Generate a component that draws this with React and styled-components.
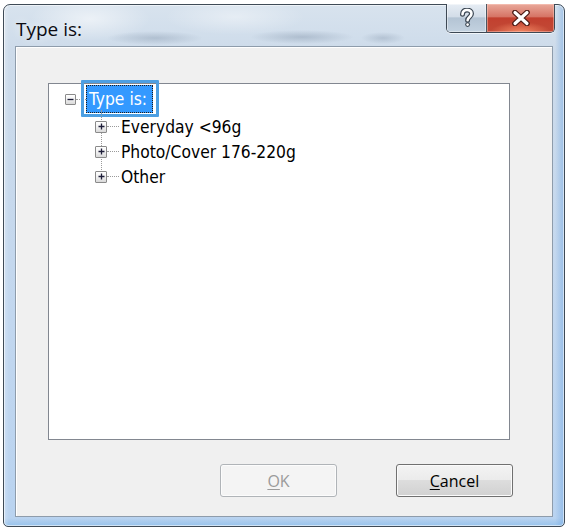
import React from 'react';
import styled, { createGlobalStyle } from 'styled-components';

const GlobalStyle = createGlobalStyle`
  html, body {
    margin: 0;
    padding: 0;
    background: #ffffff;
  }
  * {
    box-sizing: border-box;
  }
`;

const App = () => {
  return (
    <>
      <GlobalStyle />
      <Window>
        <TitleBar>
          <Title>Type is:</Title>
          <CaptionButtons>
            <HelpButton aria-label="Help">
              <svg width="16" height="20" viewBox="0 0 16 20">
                <path
                  d="M3.5 6.2 C3.5 3.2 5.6 2 8 2 C10.6 2 12.5 3.4 12.5 5.8 C12.5 8.8 8.6 9 8.6 12.2"
                  fill="none"
                  stroke="#3b4652"
                  strokeWidth="5"
                  strokeLinecap="round"
                />
                <path
                  d="M3.5 6.2 C3.5 3.2 5.6 2 8 2 C10.6 2 12.5 3.4 12.5 5.8 C12.5 8.8 8.6 9 8.6 12.2"
                  fill="none"
                  stroke="#ffffff"
                  strokeWidth="2.6"
                  strokeLinecap="round"
                />
                <circle cx="8.6" cy="16.6" r="2.4" fill="#3b4652" />
                <circle cx="8.6" cy="16.6" r="1.3" fill="#ffffff" />
              </svg>
            </HelpButton>
            <CloseButton aria-label="Close">
              <svg width="20" height="16" viewBox="0 0 20 16">
                <path d="M4 2.5 L16 13.5 M16 2.5 L4 13.5" stroke="#4b1a14" strokeWidth="5.6" strokeLinecap="round" />
                <path d="M4 2.5 L16 13.5 M16 2.5 L4 13.5" stroke="#ffffff" strokeWidth="3.2" strokeLinecap="round" />
              </svg>
            </CloseButton>
          </CaptionButtons>
        </TitleBar>

        <Client>
          <Tree>
            <RootRow>
              <Expander>
                <svg width="9" height="9" viewBox="0 0 9 9">
                  <path d="M1.5 4.5 H7.5" stroke="#1f1f3a" strokeWidth="1.3" />
                </svg>
              </Expander>
              <Connector $width={10} />
              <Selected>
                Type is:
                <Highlight />
              </Selected>
            </RootRow>
            <ChildList>
              {['Everyday <96g', 'Photo/Cover 176-220g', 'Other'].map((label) => (
                <ChildRow key={label}>
                  <Expander $size={12}>
                    <svg width="9" height="9" viewBox="0 0 9 9">
                      <path d="M1.5 4.5 H7.5 M4.5 1.5 V7.5" stroke="#1f1f3a" strokeWidth="1.3" />
                    </svg>
                  </Expander>
                  <Connector $width={12} />
                  <Label>{label}</Label>
                </ChildRow>
              ))}
            </ChildList>
          </Tree>

          <ButtonRow>
            <PushButton disabled>
              <u>O</u>K
            </PushButton>
            <PushButton>
              <u>C</u>ancel
            </PushButton>
          </ButtonRow>
        </Client>
      </Window>
    </>
  );
};

const Window = styled.div`
  margin: 4px 0 0 3px;
  width: 562px;
  height: 523px;
  display: flex;
  flex-direction: column;
  padding: 0 11px 9px 11px;
  border: 1px solid #3f4b57;
  border-radius: 7px 7px 5px 5px;
  background:
    linear-gradient(90deg, rgba(255, 255, 255, 0.25) 0, rgba(255, 255, 255, 0) 5px),
    linear-gradient(270deg, rgba(110, 165, 225, 0.5) 0, rgba(110, 165, 225, 0) 9px),
    linear-gradient(0deg, rgba(110, 175, 230, 0.45) 0, rgba(110, 175, 230, 0) 8px),
    linear-gradient(180deg, #d8e3ee 0, #cddbea 46px, #c2d7ef 60%, #b9d3f0 100%);
  box-shadow: inset 0 0 0 1px rgba(255, 255, 255, 0.55);
`;

const TitleBar = styled.div`
  height: 41px;
  flex-shrink: 0;
  display: flex;
  justify-content: space-between;
  align-items: flex-start;
  background:
    radial-gradient(ellipse 48px 7px at 140px 33px, rgba(95, 115, 140, 0.28), transparent),
    radial-gradient(ellipse 52px 7px at 287px 32px, rgba(95, 115, 140, 0.3), transparent),
    radial-gradient(ellipse 22px 6px at 368px 33px, rgba(95, 115, 140, 0.25), transparent),
    radial-gradient(ellipse 60px 22px at 75px 14px, rgba(255, 255, 255, 0.55), transparent),
    radial-gradient(ellipse 70px 18px at 220px 12px, rgba(255, 255, 255, 0.4), transparent);
`;

const Title = styled.span`
  margin: 12px 0 0 1px;
  font-family: 'Open Sans', 'Noto Sans', sans-serif;
  font-size: 19px;
  line-height: 24px;
  color: #0b0b12;
  text-shadow: 0 0 8px rgba(255, 255, 255, 0.9);
`;

const CaptionButtons = styled.div`
  display: flex;
  margin: -1px -2px 0 0;
  border: 1px solid #3e4955;
  border-top: none;
  border-radius: 0 0 5px 5px;
  overflow: hidden;
  box-shadow: 0 1px 0 rgba(255, 255, 255, 0.7);
`;

const CaptionButton = styled.div`
  height: 28px;
  display: flex;
  align-items: center;
  justify-content: center;
`;

const HelpButton = styled(CaptionButton)`
  width: 40px;
  border-right: 1px solid #4b5762;
  background: linear-gradient(
    180deg,
    #e6edf4 0%,
    #d3dde8 45%,
    #b4c4d4 50%,
    #c3d2e0 100%
  );
  box-shadow: inset 0 0 0 1px rgba(255, 255, 255, 0.45);
`;

const CloseButton = styled(CaptionButton)`
  width: 67px;
  background:
    radial-gradient(ellipse 30px 10px at 50% 100%, rgba(255, 150, 110, 0.8), transparent),
    linear-gradient(180deg, #e9a99b 0%, #d67566 45%, #c2402f 50%, #c24a36 100%);
  box-shadow: inset 0 0 0 1px rgba(255, 210, 200, 0.45);
`;

const Client = styled.div`
  flex: 1;
  display: flex;
  flex-direction: column;
  padding: 36px 42px 19px 32px;
  background: #f0f0f0;
  border: 1px solid #8e9cab;
  box-shadow: inset 1px 1px 0 #ffffff;
`;

const Tree = styled.div`
  height: 357px;
  flex-shrink: 0;
  background: #ffffff;
  border: 1px solid #828790;
  font-family: 'DejaVu Sans Condensed', 'DejaVu Sans', sans-serif;
  font-size: 17.3px;
  color: #000000;
`;

const RootRow = styled.div`
  height: 30px;
  display: flex;
  align-items: center;
  padding-left: 16px;
`;

const ChildList = styled.div`
  position: relative;

  &::before {
    content: '';
    position: absolute;
    left: 52px;
    top: -4px;
    bottom: 13px;
    border-left: 1px dotted #9a9a9a;
  }
`;

const ChildRow = styled.div`
  position: relative;
  height: 25px;
  display: flex;
  align-items: center;
  padding-left: 46px;
`;

const Expander = styled.span`
  position: relative;
  z-index: 1;
  width: ${(p) => p.$size || 11}px;
  height: ${(p) => p.$size || 11}px;
  display: flex;
  align-items: center;
  justify-content: center;
  flex-shrink: 0;
  border: 1px solid #8a8a8a;
  border-radius: 1px;
  background: linear-gradient(180deg, #ffffff 0%, #f1f1f1 50%, #d9d9d9 100%);
`;

const Connector = styled.span`
  width: ${(p) => p.$width}px;
  flex-shrink: 0;
  border-top: 1px dotted #9a9a9a;
`;

const Selected = styled.span`
  position: relative;
  height: 28px;
  display: flex;
  align-items: center;
  padding: 0 5px 0 2px;
  background: #3399ff;
  color: #ffffff;
  border: 1px dotted #1c1c1c;
`;

const Highlight = styled.span`
  position: absolute;
  left: -6px;
  right: -7px;
  top: -6px;
  bottom: -5px;
  border: 3px solid #4d9fe2;
  border-radius: 1px;
  pointer-events: none;
`;

const Label = styled.span`
  padding-left: 2px;
  white-space: nowrap;
`;

const ButtonRow = styled.div`
  display: flex;
  justify-content: flex-end;
  gap: 59px;
  margin: 24px -3px 0 0;
`;

const PushButton = styled.button`
  width: 117px;
  height: 33px;
  padding: 0;
  font-family: 'Open Sans', 'Noto Sans', sans-serif;
  font-size: 16px;
  color: #000000;
  border: 1px solid #707070;
  border-radius: 3px;
  background: linear-gradient(180deg, #f3f3f3 0%, #ebebeb 50%, #dddddd 50%, #d1d1d1 100%);
  box-shadow: inset 0 0 0 1px #fbfbfb;

  &:disabled {
    color: #9b9b9b;
    border-color: #b0b4b8;
    background: #f4f4f4;
    box-shadow: inset 0 0 0 1px #fcfcfc;
  }

  u {
    text-underline-offset: 2px;
  }
`;

export default App;
